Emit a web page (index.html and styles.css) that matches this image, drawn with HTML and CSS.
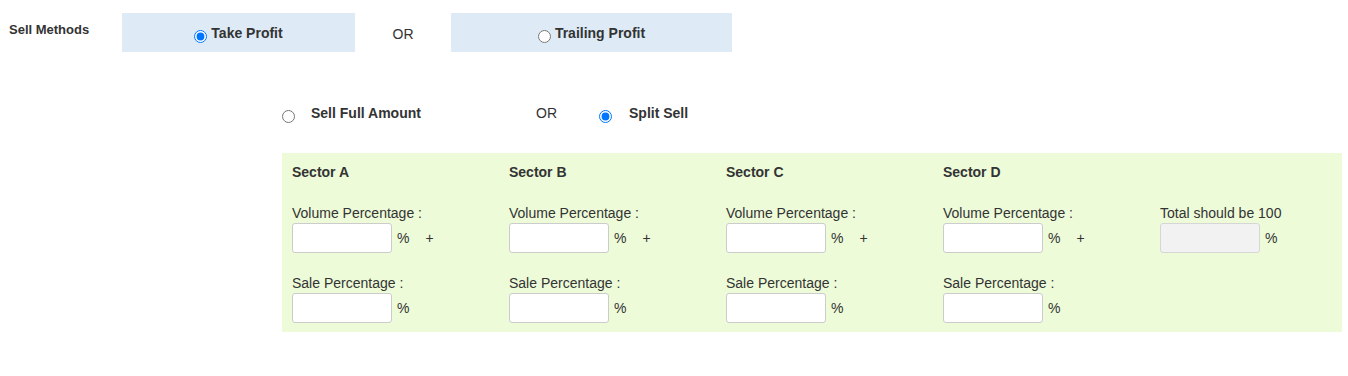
FILE: index.html
```html
<!DOCTYPE html>
<html>
<head>
<meta charset="utf-8">
<link rel="stylesheet" href="styles.css">
</head>
<body>
<div class="page">
  <div class="methods">
    <div class="methods-label">Sell Methods</div>
    <label class="method-box box-take">
      <input type="radio" name="method" class="radio" checked>
      <span class="method-text">Take Profit</span>
    </label>
    <div class="or-col">OR</div>
    <label class="method-box box-trail">
      <input type="radio" name="method" class="radio">
      <span class="method-text">Trailing Profit</span>
    </label>
  </div>

  <div class="amount-row">
    <label class="amount-opt opt-full">
      <input type="radio" name="amount" class="radio">
      <span class="amount-text">Sell Full Amount</span>
    </label>
    <div class="amount-or">OR</div>
    <label class="amount-opt opt-split">
      <input type="radio" name="amount" class="radio" checked>
      <span class="amount-text">Split Sell</span>
    </label>
  </div>

  <div class="panel">
    <div class="sector">
      <div class="sector-title">Sector A</div>
      <div class="field-label">Volume Percentage :</div>
      <div class="field-row"><input type="text" class="pct-input"><span class="pct">%</span><span class="plus">+</span></div>
      <div class="field-label second">Sale Percentage :</div>
      <div class="field-row"><input type="text" class="pct-input"><span class="pct">%</span></div>
    </div>
    <div class="sector">
      <div class="sector-title">Sector B</div>
      <div class="field-label">Volume Percentage :</div>
      <div class="field-row"><input type="text" class="pct-input"><span class="pct">%</span><span class="plus">+</span></div>
      <div class="field-label second">Sale Percentage :</div>
      <div class="field-row"><input type="text" class="pct-input"><span class="pct">%</span></div>
    </div>
    <div class="sector">
      <div class="sector-title">Sector C</div>
      <div class="field-label">Volume Percentage :</div>
      <div class="field-row"><input type="text" class="pct-input"><span class="pct">%</span><span class="plus">+</span></div>
      <div class="field-label second">Sale Percentage :</div>
      <div class="field-row"><input type="text" class="pct-input"><span class="pct">%</span></div>
    </div>
    <div class="sector">
      <div class="sector-title">Sector D</div>
      <div class="field-label">Volume Percentage :</div>
      <div class="field-row"><input type="text" class="pct-input"><span class="pct">%</span><span class="plus">+</span></div>
      <div class="field-label second">Sale Percentage :</div>
      <div class="field-row"><input type="text" class="pct-input"><span class="pct">%</span></div>
    </div>
    <div class="sector sector-total">
      <div class="sector-title"></div>
      <div class="field-label">Total should be 100</div>
      <div class="field-row"><input type="text" class="pct-input total" disabled><span class="pct">%</span></div>
    </div>
  </div>
</div>
</body>
</html>
```

FILE: styles.css
```css
* { box-sizing: border-box; }

body {
  margin: 0;
  background: #ffffff;
  font-family: "Liberation Sans", Arial, sans-serif;
  color: #333333;
}

.page {
  width: 1348px;
  height: 376px;
}

.radio {
  width: 13px;
  height: 13px;
  margin: 0;
  flex: none;
}

/* Row 1 */
.methods {
  display: flex;
  align-items: flex-start;
  padding-top: 13px;
}

.methods-label {
  width: 122px;
  padding-left: 9px;
  padding-top: 9px;
  font-size: 13px;
  font-weight: bold;
  line-height: 15px;
  color: #333333;
}

.method-box {
  display: flex;
  align-items: center;
  justify-content: center;
  gap: 4px;
  height: 39px;
  background: #deebf7;
}

.method-box .radio {
  margin-top: 7px;
}

.box-take { width: 233px; }
.box-trail { width: 281px; }

.method-text {
  font-size: 14px;
  font-weight: bold;
  line-height: 16px;
  color: #333333;
}

.or-col {
  width: 96px;
  height: 39px;
  display: flex;
  align-items: center;
  justify-content: center;
  font-size: 14px;
  color: #333333;
  padding-top: 2px;
}

/* Row 2 */
.amount-row {
  display: flex;
  align-items: center;
  margin-top: 51px;
  margin-left: 282px;
  height: 20px;
}

.amount-opt {
  display: flex;
  align-items: center;
}

.amount-opt .radio {
  margin-top: 6px;
}

.opt-full { width: 254px; gap: 16px; }
.opt-split { gap: 17px; }

.amount-text {
  font-size: 14px;
  font-weight: bold;
  line-height: 16px;
  color: #333333;
}

.amount-or {
  width: 63px;
  font-size: 14px;
  line-height: 16px;
  color: #333333;
}

/* Panel */
.panel {
  display: flex;
  margin-top: 30px;
  margin-left: 282px;
  width: 1060px;
  height: 179px;
  padding: 10px 0 9px 10px;
  background: #edfbd9;
}

.sector {
  width: 217px;
  flex: none;
  display: flex;
  flex-direction: column;
}

.sector-total {
  width: 180px;
}

.sector-title {
  font-size: 14px;
  font-weight: bold;
  line-height: 18px;
  height: 18px;
  color: #333333;
}

.field-label {
  margin-top: 24px;
  font-size: 14px;
  line-height: 16px;
  color: #333333;
}

.field-label.second {
  margin-top: 22px;
}

.field-row {
  display: flex;
  align-items: center;
  margin-top: 2px;
  height: 30px;
}

.pct-input {
  width: 100px;
  height: 30px;
  border: 1px solid #cccccc;
  border-radius: 3px;
  background: #ffffff;
  padding: 0 6px;
  font-family: inherit;
  font-size: 14px;
}

.pct-input.total {
  background: #f2f2f2;
  border-color: #d6d6d6;
}

.pct {
  margin-left: 5px;
  font-size: 14px;
  line-height: 16px;
  color: #333333;
}

.plus {
  margin-left: 16px;
  font-size: 14px;
  line-height: 16px;
  color: #333333;
}
```
